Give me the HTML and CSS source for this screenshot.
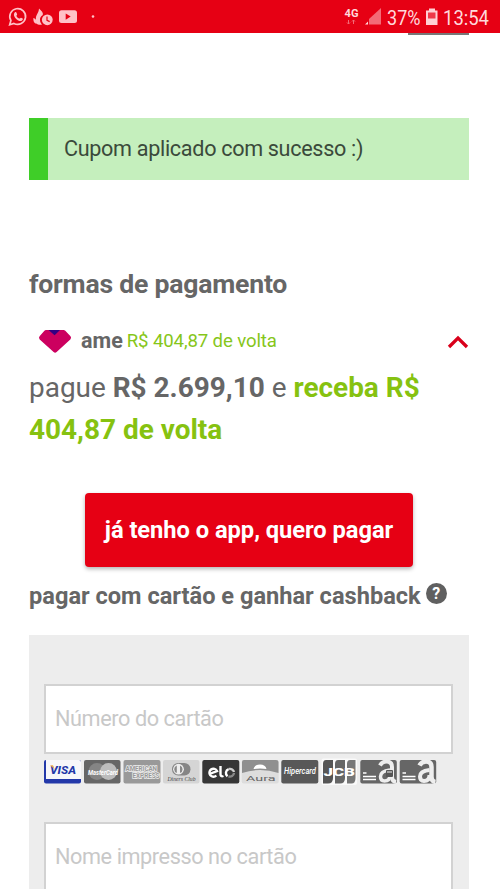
FILE: index.html
```html
<!DOCTYPE html>
<html lang="pt-BR">
<head>
<meta charset="utf-8">
<title>Pagamento</title>
<link rel="stylesheet" href="styles.css">
</head>
<body>
<header class="status">
  <svg class="status-left" width="110" height="33" viewBox="0 0 110 33">
    <g fill="none" stroke="#ffc1c7" stroke-width="1.7">
      <path d="M9.7 24.8l1.2-4.3a7.9 7.9 0 1 1 3 2.9z"/>
    </g>
    <path fill="#ffc1c7" d="M14.7 12.4c.8-.7 1.500-.5 1.800.3l.6 1.500c.2.6-.7 1.200-.7 1.700.7 1.300 1.800 2.200 3.100 2.700.5 0 1-1.100 1.500-.9l1.700.9c.6.4-.2 2-1.300 2.300-3 .9-7.800-3.700-7.500-6.500 0-.8.300-1.500.8-2z"/>
    <path fill="#ffc1c7" d="M39 8.500c2.500 2.500 4.500 4.200 3.800 6.500-2 1.200-3 3-2.800 5 .1 2 .8 3.300 2 4.500-2 .5-4.300.2-5.800-1-2 0-3-2.500-2.800-5.500 1.200.3 2 1 2.600 1.800-.8-4.500 2.800-6.500 3-11.300z"/>
    <circle cx="47.300" cy="19.800" r="5.400" fill="#ffc1c7"/>
    <path d="M47 16.500v3.800l2.700 1.300" fill="none" stroke="#e60014" stroke-width="1.200"/>
    <rect x="59" y="10.300" width="18" height="12.600" rx="2.500" fill="#ffc1c7"/>
    <path d="M65.700 13.400v6.400l5-3.200z" fill="#e60014"/>
    <circle cx="93" cy="16.500" r="1.300" fill="#ffc1c7"/>
  </svg>
  <svg class="status-right" width="160" height="33" viewBox="340 0 160 33">
    <g class="status-text">
      <text x="344.500" y="16.500" font-size="10" font-weight="700" textLength="14" lengthAdjust="spacingAndGlyphs">4G</text>
      <text x="387" y="24.600" font-size="21" textLength="33.500" lengthAdjust="spacingAndGlyphs">37%</text>
      <text x="443" y="24.600" font-size="21" textLength="46" lengthAdjust="spacingAndGlyphs">13:54</text>
    </g>
    <path d="M348.500 20v4m-1.500-1.500l1.500 1.500 1.500-1.500M353.500 24v-4m-1.500 1.500l1.500-1.500 1.500 1.500" fill="none" stroke="#f36b77"/>
    <path d="M381 8v16.500h-12V19z" fill="#f36b77"/>
    <path d="M368 21.500v3h-3z" fill="#ffd9dc"/>
    <path d="M429 8.500h6v2h2.500v14.500h-11.500V10.500h3z" fill="#ffd0d4"/>
    <path d="M428 12.500h7.500v6H428z" fill="#ee3949"/>
  </svg>
</header>
<main class="page">
  <div class="tab-edge"></div>
  <div class="alert">Cupom aplicado com sucesso :)</div>
  <h2 class="heading">formas de pagamento</h2>
  <div class="method">
    <svg class="gem" width="34" height="25" viewBox="0 0 34 25">
      <path d="M8 1h17.500q1 0 1.800.7l5.200 5.500q1.300 1.600-.2 3.200L18.600 23q-1.500 1.300-3 0L1.700 10.400Q.3 8.800 1.600 7.200L6.400 1.700Q7 1 8 1z" fill="#cc005f"/>
      <path d="M10.500 1h11.500l-5.400 5.200z" fill="#320083"/>
    </svg>
    <b class="method-name">ame</b>
    <span class="method-back">R$ 404,87 de volta</span>
    <svg class="chevron" width="22" height="14" viewBox="0 0 22 14"><path d="M2 12l9-9 9 9" fill="none" stroke="#d9001b" stroke-width="3.300"/></svg>
  </div>
  <p class="offer">pague <b>R$ 2.699,10</b> e <b class="green">receba R$ 404,87 de volta</b></p>
  <button class="pay">já tenho o app, quero pagar</button>
  <div class="card-title"><span>pagar com cartão e ganhar cashback</span><span class="help">?</span></div>
  <section class="panel">
    <div class="field">Número do cartão</div>
    <svg class="brands" width="394" height="26" viewBox="44 759 394 26">
      <rect x="44" y="760" width="37" height="23.500" rx="2" fill="#2338a9"/>
      <path d="M46 760h33q2 0 2 2v17H46z" fill="#f7f7fa"/>
      <text x="50" y="773.700" font-size="11" font-weight="800" font-style="italic" fill="#2338a9" textLength="26" lengthAdjust="spacingAndGlyphs">VISA</text>
      <path d="M50 765.300h3l1.500 4z" fill="#e9a84c"/>

      <rect x="84" y="760" width="36.500" height="23.500" rx="2" fill="#666"/>
      <circle cx="97" cy="771.500" r="8.500" fill="#858585"/><circle cx="108.500" cy="771.500" r="8.500" fill="#bcbcbc"/>
      <text x="88" y="775" font-size="8" font-weight="700" font-style="italic" fill="#fff" textLength="30" lengthAdjust="spacingAndGlyphs">MasterCard</text>

      <rect x="123.500" y="760" width="37" height="23.500" rx="2" fill="#999"/>
      <g font-size="7" font-weight="700" fill="#999" stroke="#eee" stroke-width="1.500" paint-order="stroke">
        <text x="125.500" y="770.500" textLength="31.500" lengthAdjust="spacingAndGlyphs">AMERICAN</text>
        <text x="132.500" y="777.800" textLength="27" lengthAdjust="spacingAndGlyphs">EXPRESS</text>
      </g>

      <rect x="163" y="760" width="36.500" height="23.500" rx="2" fill="#d5d5d5"/>
      <rect x="172" y="763" width="18.500" height="12.500" rx="6.200" fill="#858585"/>
      <circle cx="178.500" cy="769.200" r="5.400" fill="#eee"/><path d="M176.800 765.500a4 4 0 0 0 0 7.500zM180 765.500a4 4 0 0 1 0 7.500z" fill="#888"/>
      <text class="serif" x="167.500" y="781.300" font-size="7" fill="#444" textLength="28" lengthAdjust="spacingAndGlyphs">Diners Club</text>

      <rect x="202.300" y="760" width="37" height="23.500" rx="2" fill="#363636"/>
      <g fill="none" stroke="#fff" stroke-width="2.400">
        <path d="M209.500 774l7.500-3a4 4 0 1 0-.7 4.500M220.500 766v8q0 3.200 3 2"/>
        <path d="M227.500 776.200a4 4 0 0 1 1.200-7"/>
        <path d="M229 769a4 4 0 0 1 5 3" stroke="#ccc"/>
        <path d="M234 773a4 4 0 0 1-5.500 3.300" stroke="#888"/>
      </g>

      <rect x="241.700" y="760" width="37" height="23.500" rx="2" fill="#ddd"/>
      <path d="M242 762q0-2 2-2h32q2.500 0 2.500 2v11Q260 767 242 773z" fill="#8f8f8f"/>
      <path d="M253.500 769q1-4.500 6.500-4.500t6.500 4.500q-6.500-1-13 0z" fill="#fff"/>
      <text x="246" y="780.800" font-size="7.500" fill="#666" textLength="29.500" lengthAdjust="spacingAndGlyphs">Aura</text>

      <rect x="281.300" y="760" width="37" height="23.500" rx="2" fill="#585858"/>
      <text x="284" y="774.300" font-size="8.500" font-weight="500" font-style="italic" fill="#fff" textLength="32" lengthAdjust="spacingAndGlyphs">Hipercard</text>

      <rect x="321.500" y="758.500" width="35.500" height="26.500" rx="2" fill="#fafafa"/>
      <path d="M326 760h7v18q0 5.500-5 5.500h-5V764q0-4 3-4z" fill="#555"/>
      <path d="M338 760h7v18q0 5.500-5 5.500h-5V764q0-4 3-4z" fill="#666"/>
      <path d="M350 760h5.500v18q0 5.500-4 5.500H347V764q0-4 3-4z" fill="#777"/>
      <text x="323.500" y="776" font-size="11" font-weight="900" fill="#fff" textLength="31.500" lengthAdjust="spacingAndGlyphs">JCB</text>

      <rect x="360.300" y="760" width="36.500" height="23.500" rx="2" fill="#666"/>
      <path d="M363 773h3.500M363 776.500h13M363 779.500h13" stroke="#fff" stroke-width="1.500"/>
      <path d="M380 765.500q2-4 6.500-4 5.500 0 5.500 5.500v10q0 4.500 4 5" fill="none" stroke="#eee" stroke-width="4"/>
      <path d="M390 770q-9.500 1-9.500 6.500 0 4.500 4 4.500 5.500 0 5.500-6" fill="none" stroke="#eee" stroke-width="3.500"/>
      <rect x="386" y="770" width="7" height="7" rx="1" fill="#555"/><path d="M387 772h5" stroke="#eee"/>

      <rect x="399.700" y="760" width="36.500" height="23.500" rx="2" fill="#666"/>
      <path d="M402.500 773h3.500M402.500 776.500h13M402.500 779.500h13" stroke="#fff" stroke-width="1.500"/>
      <path d="M419.500 765.500q2-4 6.500-4 5.500 0 5.500 5.500v10q0 4.500 4 5" fill="none" stroke="#eee" stroke-width="4.500"/>
      <path d="M429.500 770q-9.500 1-9.500 6.500 0 4.500 4 4.500 5.500 0 5.500-6" fill="none" stroke="#eee" stroke-width="4"/>
    </svg>
    <div class="field">Nome impresso no cartão</div>
  </section>
</main>
</body>
</html>
```
FILE: styles.css
```css
* { box-sizing: border-box; }
body { margin: 0; height: 889px; overflow: hidden; background: #fff; font-family: Roboto, "Liberation Sans", sans-serif; color: #666; }
.status { height: 33px; background: #e60014; display: flex; justify-content: space-between; }
.status-text { fill: #ffd9dc; }
.serif { font-family: "Liberation Serif", serif; font-style: italic; }
.page { padding: 0 31px 0 29px; }
.tab-edge { width: 61px; height: 2px; margin-left: auto; background: #777; }
.alert { height: 62px; margin-top: 83px; padding-left: 16px; border-left: 19px solid #3fce28; background: #c5efbd; color: #3b4a3b; font-size: 21.600px; letter-spacing: -.32px; line-height: 62px; white-space: nowrap; }
.heading { margin: 88px 0 0; font-size: 26.600px; letter-spacing: -.22px; line-height: 32px; font-weight: 700; white-space: nowrap; }
.method { display: flex; height: 40px; margin-top: 22px; padding-left: 9px; align-items: center; white-space: nowrap; }
.gem { margin-top: -2px; }
.method-name { margin: -3px 0 0 9px; font-size: 21.500px; }
.method-back { margin: -2px 0 0 4px; font-size: 18.600px; letter-spacing: -.12px; color: #86c61a; }
.chevron { margin: -1px 0 0 auto; }
.offer { margin: 5px 0 0; font-size: 27.950px; line-height: 42px; }
.green { color: #86c210; }
.pay { display: block; width: 328px; height: 74px; margin: 42px 0 0 56px; padding: 0; border: 0; border-radius: 4px; background: #e60014; color: #fff; font: 700 23.700px Roboto, sans-serif; letter-spacing: -.04px; white-space: nowrap; box-shadow: 0 2px 4px rgba(0,0,0,.3); }
.card-title { display: flex; height: 32px; margin-top: 13px; align-items: center; font-size: 23.600px; font-weight: 700; white-space: nowrap; }
.help { width: 21px; height: 21px; margin: -5px 0 0 5px; border-radius: 50%; background: #606060; color: #fff; font-size: 16px; line-height: 21px; text-align: center; }
.panel { height: 260px; margin-top: 23px; padding: 49px 16px 0 15px; background: #ededed; }
.field { height: 70px; padding-left: 9px; border: 2px solid #d2d2d2; background: #fff; color: #c8c8c8; font-size: 21.700px; letter-spacing: -.42px; line-height: 66px; white-space: nowrap; }
.brands { display: block; margin: 5px 0 37px; overflow: visible; }
```
